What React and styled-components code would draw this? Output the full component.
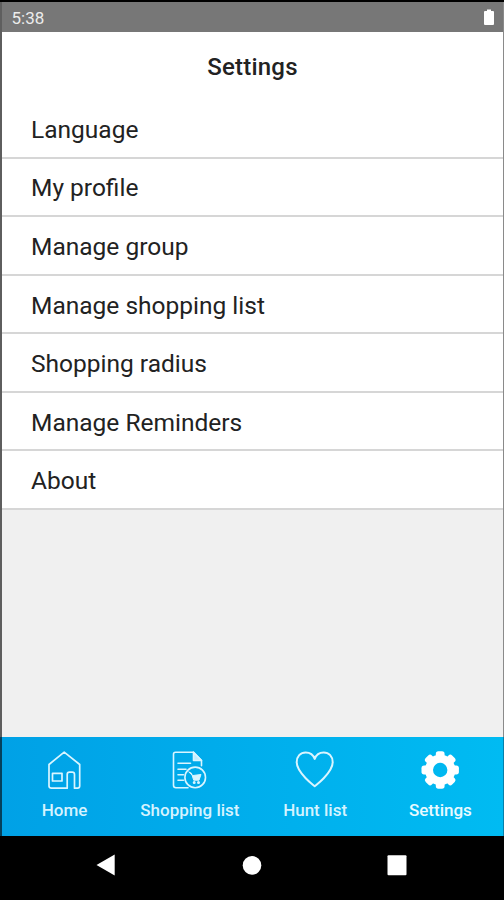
import React from "react";
import styled, { createGlobalStyle } from "styled-components";

const GlobalStyle = createGlobalStyle`
  * { box-sizing: border-box; }
  body { margin: 0; background: #000; font-family: Roboto, "Liberation Sans", sans-serif; }
`;

const Device = styled.div`
  width: 504px;
  height: 900px;
  padding-top: 2px;
  display: flex;
  flex-direction: column;
  background: #000;
  overflow: hidden;
`;

const Screen = styled.div`
  height: 735px;
  display: flex;
  flex-direction: column;
  background: #f0f0f0;
  border-left: 2px solid #5e5e5e;
  border-right: 1px solid #8a8a8a;
`;

const StatusBar = styled.header`
  height: 29.5px;
  flex: none;
  display: flex;
  align-items: center;
  justify-content: space-between;
  padding: 2px 9px 0 9.5px;
  background: #777;
  color: #ececec;
  font-size: 17px;
  line-height: 20px;
`;

const TitleBar = styled.div`
  height: 68.6px;
  flex: none;
  display: flex;
  align-items: center;
  justify-content: center;
  padding-top: 3px;
  background: #fff;
`;

const Title = styled.h1`
  margin: 0;
  color: #222;
  font-size: 24px;
  font-weight: 500;
  line-height: 30px;
  letter-spacing: 0.2px;
`;

const List = styled.ul`
  margin: 0;
  padding: 0;
  list-style: none;
`;

const Item = styled.li`
  height: 58.57px;
  display: flex;
  align-items: center;
  padding: 3px 29px 0;
  background: #fff;
  border-bottom: 2px solid #d6d6d6;
  color: #222;
  font-size: 24.5px;
  font-weight: 400;
  line-height: 30px;
`;

const TabBar = styled.nav`
  height: 99px;
  flex: none;
  display: grid;
  grid-template-columns: repeat(4, 1fr);
  border-left: 2px solid #04405c;
  border-right: 1px solid #0580ab;
  background: linear-gradient(90deg, #00a1e6, #00bbf2);
`;

const Tab = styled.div`
  display: flex;
  flex-direction: column;
  align-items: center;
  padding-top: 12.5px;
  color: ${(p) => (p.$active ? "#e8faff" : "#d5f3ff")};
`;

const TabLabel = styled.span`
  margin-top: 10.5px;
  font-size: 17px;
  font-weight: 500;
  line-height: 20px;
  white-space: nowrap;
`;

const SystemBar = styled.footer`
  height: 58px;
  flex: none;
  display: flex;
  align-items: center;
  justify-content: space-between;
  padding: 0 97px 0 96px;
`;

const Icon = styled.svg`
  display: block;
  flex: none;
  overflow: visible;
`;

const Battery = () => (
  <Icon width="10" height="17" viewBox="0 0 10 17">
    <path d="M1 2H3V.5H7V2H9Q10 2 10 3V15Q10 16 9 16H1Q0 16 0 15V3Q0 2 1 2Z" fill="#fff" />
  </Icon>
);

const line = { fill: "none", stroke: "#d9f5ff", strokeLinejoin: "round", strokeLinecap: "round" };

const HomeIcon = () => (
  <Icon width="40" height="40" viewBox="0 0 40 40" {...line} strokeWidth="1.7">
    <path d="M4 14.5L19.2 2.2L34.7 14.5V36Q34.7 38.2 32.5 38.2H29.5V24.5Q29.5 22.2 27.2 22.2H24.5Q22.2 22.2 22.2 24.5V38.2H6.5Q4 38.2 4 36Z" />
    <rect x="7.5" y="23.3" width="9.5" height="7.7" />
  </Icon>
);

const ListIcon = () => (
  <Icon width="40" height="40" viewBox="0 0 40 40" {...line} strokeWidth="1.6">
    <path d="M18 37.7H6Q3.5 37.7 3.5 35.2V4.2Q3.5 2.2 5.5 2.2H23.5L31.5 10.5V15.7" />
    <path d="M23.5 2.2V10.5H31.5Z" fill="#c0edff" />
    <path d="M8 13.3H20.5M8 19.3H16M8 24.7H13.5M8 30.3H13.5" />
    <circle cx="25.2" cy="27.4" r="10.3" />
    <path d="M19 22L21.5 23.3L23.7 30.2H29L31 24.5L23 25.5Z" fill="#d9f5ff" strokeWidth="1" />
    <circle cx="24.2" cy="32.4" r=".7" />
    <circle cx="28.5" cy="32.4" r=".7" />
  </Icon>
);

const HeartIcon = () => (
  <Icon width="40" height="40" viewBox="0 0 40 40" {...line} strokeWidth="2">
    <path d="M19.7 36.2C17.7 34.5 14.2 31.9 10.7 28.2C5.4 22.6 1.7 17.9 1.7 12.2C1.7 6.5 5.4 2.4 10.7 2.4C14.9 2.4 18.2 4.5 19.7 8.9C21.2 4.5 24.5 2.4 28.7 2.4C34 2.4 37.7 6.5 37.7 12.2C37.7 17.9 34 22.6 28.7 28.2C25.2 31.9 21.7 34.5 19.7 36.2Z" />
  </Icon>
);

const GearIcon = () => (
  <Icon width="40" height="40" viewBox="0 0 40 40">
    <circle cx="20.2" cy="20" r="11.2" fill="none" stroke="#fff" strokeWidth="8" />
    {[0, 45, 90, 135, 180, 225, 270, 315].map((angle) => (
      <rect
        key={angle}
        x="15.8"
        y="1.3"
        width="8.8"
        height="7.5"
        rx="2.6"
        fill="#fff"
        transform={`rotate(${angle} 20.2 20)`}
      />
    ))}
  </Icon>
);

const items = [
  "Language",
  "My profile",
  "Manage group",
  "Manage shopping list",
  "Shopping radius",
  "Manage Reminders",
  "About",
];

const tabs = [
  { label: "Home", Glyph: HomeIcon },
  { label: "Shopping list", Glyph: ListIcon },
  { label: "Hunt list", Glyph: HeartIcon },
  { label: "Settings", Glyph: GearIcon, active: true },
];

export default function App() {
  return (
    <>
      <GlobalStyle />
      <Device>
        <Screen>
          <StatusBar>
            <span>5:38</span>
            <Battery />
          </StatusBar>
          <TitleBar>
            <Title>Settings</Title>
          </TitleBar>
          <List>
            {items.map((name) => (
              <Item key={name}>{name}</Item>
            ))}
          </List>
        </Screen>
        <TabBar>
          {tabs.map(({ label, Glyph, active }) => (
            <Tab key={label} $active={active}>
              <Glyph />
              <TabLabel>{label}</TabLabel>
            </Tab>
          ))}
        </TabBar>
        <SystemBar>
          <Icon width="19" height="22" viewBox="0 0 19 22" fill="#fff">
            <path d="M18.7 .5V21.5L.5 11Z" />
          </Icon>
          <Icon width="20" height="20" viewBox="0 0 20 20" fill="#fff">
            <circle cx="11" cy="10.4" r="9.3" />
          </Icon>
          <Icon width="20" height="20" viewBox="0 0 20 20" fill="#fff">
            <rect x=".5" y=".3" width="19" height="20" rx="1" />
          </Icon>
        </SystemBar>
      </Device>
    </>
  );
}
